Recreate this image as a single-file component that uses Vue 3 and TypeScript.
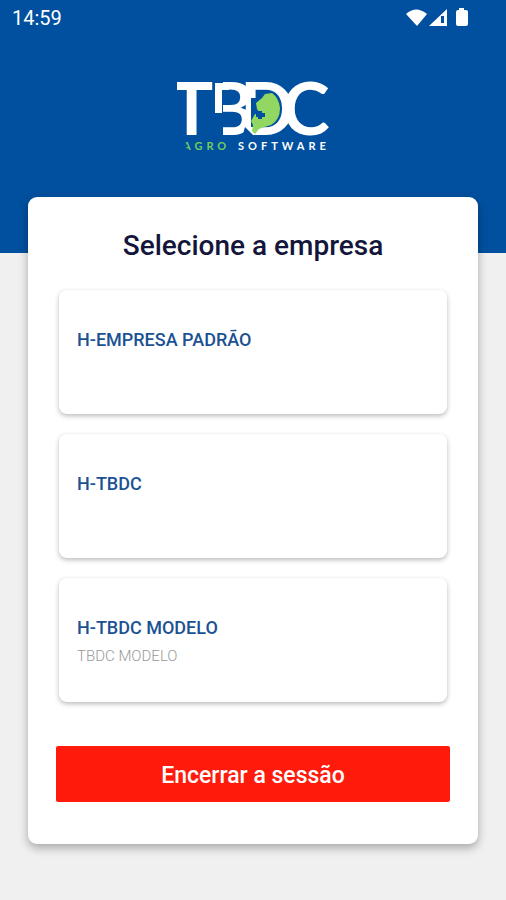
<script setup lang="ts">
interface Company {
  name: string
  detail?: string
}

const companies: Company[] = [
  { name: 'H-EMPRESA PADRÃO' },
  { name: 'H-TBDC' },
  { name: 'H-TBDC MODELO', detail: 'TBDC MODELO' },
]
</script>

<template>
  <div class="screen">
    <header class="hero">
      <div class="status">
        <time>14:59</time>
        <svg class="status-icons" width="64" height="20" viewBox="0 0 64 20" aria-hidden="true">
          <path d="M0 6 Q10 -3 21 6 L11 18 Z" fill="#fff" />
          <path d="M41 1 V18 H23 Z" fill="#fff" />
          <path d="M35 8 H38 V15 H35 Z" fill="#00509f" />
          <path d="M53 0 H58 V2 H60 Q62 2 62 4 V16 Q62 18 60 18 H52 Q50 18 50 16 V4 Q50 2 52 2 H53 Z" fill="#fff" />
        </svg>
      </div>
      <svg class="logo" width="156" height="76" viewBox="0 0 156 76" role="img" aria-label="TBDC Agro Software">
        <g class="mark">
          <text x="32" y="55">B</text>
          <path d="M34 0 H48 V57 H34 Z M47 33 H52 V47 H47 Z" class="cut" />
          <path d="M40 3 H54 V10 H47 V33 H40 Z" />

          <text x="-5" y="55">T</text>
          <path d="M-8 0 H2 V14 H-8 Z" class="cut" />
          <path d="M28 3 H36 V10 H28 Z" />

          <text x="65" y="55">D</text>
          <path d="M76 18 H84 V47 H76 Z M70 47 L78 55 V57 H68 V54 Z" class="cut" />
          <text x="107" y="55">C</text>
        </g>
        <path d="M81 23 L87 18 L90 14 L97 13 Q104 18 105 28 Q105 40 96 45 Q89 47 84 49 L80 54 L77 51 L78 45 L76 41 L80 34 H85 L82 29 Z" fill="#91d761" />
        <path d="M83 31 H87 V33 H90 V37 H87 V39 H83 V37 H81 V33 H83 Z" class="cut" />
        <g class="tagline">
          <text x="8" y="70" fill="#6fce5c">AGRO</text>
          <path d="M7 71 L11 62 L12 66 L10 71 Z" class="cut" />
          <text x="63" y="70" fill="#fff">SOFTWARE</text>
        </g>
      </svg>
    </header>

    <main class="panel">
      <h1>Selecione a empresa</h1>
      <ul class="companies">
        <li v-for="company in companies" :key="company.name">
          <button type="button" class="company">
            <span class="name">{{ company.name }}</span>
            <span v-if="company.detail" class="detail">{{ company.detail }}</span>
          </button>
        </li>
      </ul>
      <button type="button" class="logout">Encerrar a sessão</button>
    </main>
  </div>
</template>

<style>
body {
  margin: 0;
  background: #f0f0f0;
}
</style>

<style scoped>
.screen {
  min-height: 100vh;
  box-sizing: border-box;
  padding-bottom: 56px;
  background: #f0f0f0;
  font-family: Roboto, "Liberation Sans", sans-serif;
}

.hero {
  display: flex;
  flex-direction: column;
  align-items: center;
  gap: 44px;
  padding-bottom: 97px;
  background: #00509f;
}

.status {
  display: flex;
  align-self: stretch;
  align-items: center;
  justify-content: space-between;
  height: 36px;
  padding: 0 36px 0 12px;
  color: #fff;
  font-size: 20px;
}

.logo .mark {
  fill: #fff;
  font: 700 72px Lato, sans-serif;
}

.logo .cut {
  fill: #00509f;
}

.logo .tagline {
  font: 700 11px Lato, sans-serif;
  letter-spacing: 4px;
}

.panel {
  display: flex;
  flex-direction: column;
  box-sizing: border-box;
  margin: -56px 28px 0;
  padding: 32px 28px 42px;
  border-radius: 9px;
  background: #fff;
  box-shadow: 0 4px 10px rgba(0, 0, 0, 0.3);
}

h1 {
  margin: 0;
  color: #13153a;
  font-size: 28px;
  font-weight: 500;
  line-height: 34px;
  text-align: center;
}

.companies {
  display: grid;
  gap: 20px;
  margin: 27px 3px 44px;
  padding: 0;
  list-style: none;
}

.company {
  display: flex;
  flex-direction: column;
  justify-content: flex-start;
  box-sizing: border-box;
  width: 100%;
  min-height: 124px;
  gap: 4px;
  padding: 38px 18px 24px;
  border: 0;
  border-radius: 8px;
  background: #fff;
  box-shadow: 0 2px 5px rgba(0, 0, 0, 0.27);
  font-family: inherit;
  text-align: left;
}

.name {
  color: #1b5293;
  font-size: 18px;
  font-weight: 500;
  line-height: 24px;
}

.detail {
  color: #999;
  font-size: 15px;
  font-weight: 300;
  line-height: 24px;
}

.logout {
  height: 56px;
  padding: 2px 0 0;
  border: 0;
  border-radius: 2px;
  background: #ff1a0b;
  color: #fff;
  font-family: inherit;
  font-size: 23px;
  font-weight: 500;
}
</style>
